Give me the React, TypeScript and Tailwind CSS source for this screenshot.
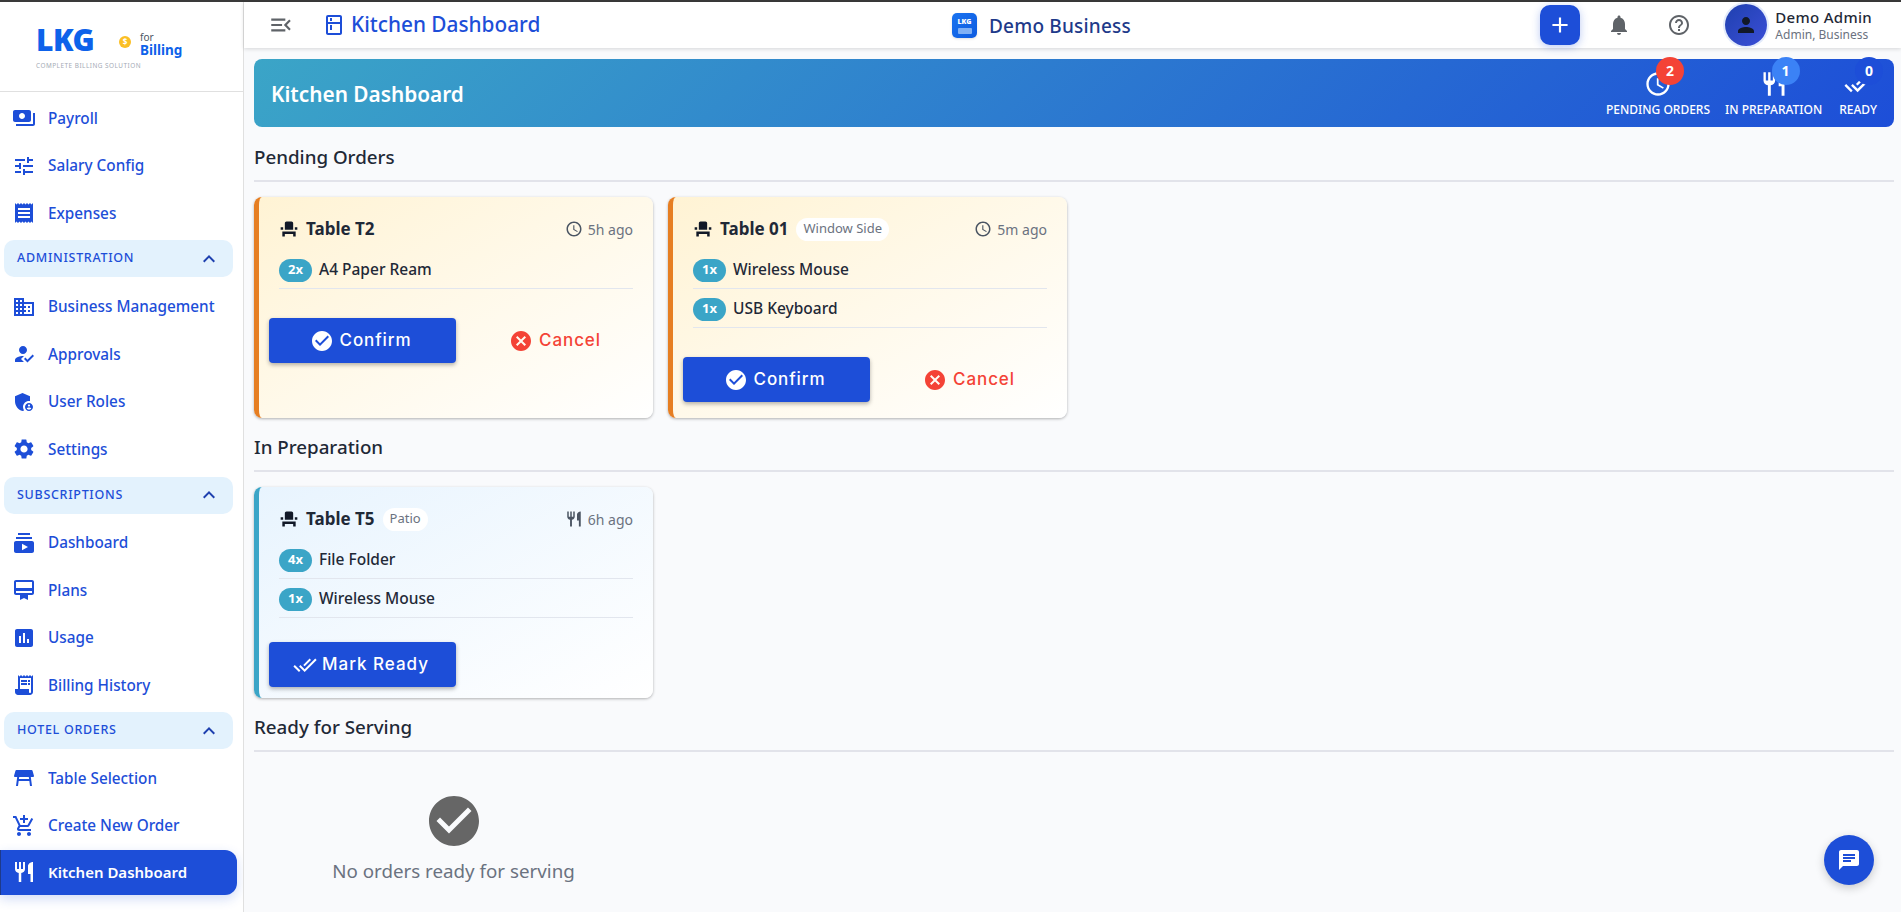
import type { ReactNode } from 'react';
import {
  MdAccessTime,
  MdAddShoppingCart,
  MdAdminPanelSettings,
  MdAssessment,
  MdBusiness,
  MdCancel,
  MdCardMembership,
  MdChat,
  MdCheckCircle,
  MdDoneAll,
  MdEventSeat,
  MdExpandLess,
  MdHelpOutline,
  MdHowToReg,
  MdMenuOpen,
  MdNotifications,
  MdOutlineKitchen,
  MdPayments,
  MdPerson,
  MdReceipt,
  MdReceiptLong,
  MdRestaurant,
  MdSettings,
  MdSubscriptions,
  MdTableRestaurant,
  MdTune,
  MdAdd,
} from 'react-icons/md';

function NavItem({ icon, label, active }: { icon: ReactNode; label: string; active?: boolean }) {
  if (active) {
    return (
      <div className="flex h-[45px] w-[237px] items-center gap-[12px] rounded-r-[12px] border-l border-[#1e3a8a] bg-[#1d4ed8] pl-[11px] text-[15px] font-semibold text-white shadow-[0_4px_12px_rgba(29,78,216,0.2)]">
        <span className="text-[24px]">{icon}</span>
        {label}
      </div>
    );
  }
  return (
    <div className="flex h-[47.5px] items-center gap-[12px] pl-3 text-[15.3px] font-medium text-[#1d4ed8]">
      <span className="text-[24px]">{icon}</span>
      {label}
    </div>
  );
}

function NavSection({ label, className }: { label: string; className: string }) {
  return (
    <div className={`ml-1 flex h-[37px] w-[229px] items-center justify-between rounded-[10px] bg-[#e3f2fd] pr-[12px] pl-[13px] text-[12.5px] font-medium tracking-[0.7px] text-[#1d4ed8] ${className}`}>
      {label}
      <MdExpandLess className="text-[24px] text-[#1e40af]" />
    </div>
  );
}

function Sidebar() {
  return (
    <aside className="flex w-[244px] shrink-0 flex-col overflow-hidden border-r border-[#e0e0e0] bg-white">
      <div className="flex h-[90px] shrink-0 flex-col border-b border-[#e0e0e0] pt-[22px] pl-[36px]">
        <div className="flex h-[32px] items-center">
          <span className="w-[56px] text-[30px] leading-[32px] font-black tracking-[-0.5px] text-[#0d62ea]">LKG</span>
          <span className="ml-[27px] flex h-[12px] w-[12px] translate-y-[2px] items-center justify-center rounded-full bg-[#fbbf24] text-[8px] leading-[12px] font-bold text-white">$</span>
          <div className="ml-[9px] flex translate-y-[4px] flex-col">
            <span className="text-[10px] leading-[12px] text-[#4b5563]">for</span>
            <span className="text-[13.5px] leading-[15px] font-bold text-[#0d62ea]">Billing</span>
          </div>
        </div>
        <span className="mt-[5px] text-[6.4px] tracking-[0.5px] text-[#a3aab5]">COMPLETE BILLING SOLUTION</span>
      </div>
      <nav className="flex flex-col pt-[2.5px]">
        <NavItem icon={<MdPayments />} label="Payroll" />
        <NavItem icon={<MdTune />} label="Salary Config" />
        <NavItem icon={<MdReceipt />} label="Expenses" />
        <NavSection label="ADMINISTRATION" className="mt-[3px] mb-[6px]" />
        <NavItem icon={<MdBusiness />} label="Business Management" />
        <NavItem icon={<MdHowToReg />} label="Approvals" />
        <NavItem icon={<MdAdminPanelSettings />} label="User Roles" />
        <NavItem icon={<MdSettings />} label="Settings" />
        <NavSection label="SUBSCRIPTIONS" className="mt-[3.5px] mb-[5.5px]" />
        <NavItem icon={<MdSubscriptions />} label="Dashboard" />
        <NavItem icon={<MdCardMembership />} label="Plans" />
        <NavItem icon={<MdAssessment />} label="Usage" />
        <NavItem icon={<MdReceiptLong />} label="Billing History" />
        <NavSection label="HOTEL ORDERS" className="mt-[3px] mb-[5.5px]" />
        <NavItem icon={<MdTableRestaurant />} label="Table Selection" />
        <NavItem icon={<MdAddShoppingCart />} label="Create New Order" />
        <NavItem icon={<MdRestaurant />} label="Kitchen Dashboard" active />
      </nav>
    </aside>
  );
}

function Topbar() {
  return (
    <header className="relative z-10 flex h-[46px] shrink-0 items-center bg-white pl-[24px] shadow-[0_1px_4px_rgba(0,0,0,0.15)]">
      <MdMenuOpen className="text-[26px] text-[#5f6368]" />
      <MdOutlineKitchen className="ml-[28px] text-[24px] text-[#1d4ed8]" />
      <span className="ml-[5px] text-[20.8px] font-medium text-[#1d4ed8]">Kitchen Dashboard</span>

      <div className="absolute left-[708px] flex items-center">
        <div className="flex h-[25px] w-[25px] flex-col items-center rounded-[5px] bg-gradient-to-br from-[#1a73f0] to-[#0d5be0] pt-[5px] shadow-sm">
          <span className="text-[7px] leading-[7px] font-black text-white">LKG</span>
          <span className="mt-[3px] h-[6px] w-[14px] rounded-[1px] bg-[#7fb0f5]" />
        </div>
        <span className="mt-[2px] ml-[12px] text-[19px] font-medium tracking-[0.2px] text-[#1e3a8a]">Demo Business</span>
      </div>

      <div className="ml-auto flex items-center pr-[29px]">
        <button className="flex h-[40px] w-[40px] items-center justify-center rounded-[10px] bg-[#1d4ed8] text-[26px] text-white shadow-[0_2px_8px_rgba(29,78,216,0.3)]">
          <MdAdd />
        </button>
        <MdNotifications className="ml-[27px] text-[24px] text-[#5f6368]" />
        <MdHelpOutline className="ml-[36px] text-[24px] text-[#5f6368]" />
        <div className="ml-[34px] flex h-[42px] w-[42px] items-center justify-center rounded-full bg-gradient-to-br from-[#1e40af] to-[#3b4fd8] text-[24px] text-[#111827] ring-2 ring-[#e3ebfb]">
          <MdPerson />
        </div>
        <div className="ml-[8px] flex flex-col">
          <span className="text-[15px] leading-[20px] font-medium tracking-[0.3px] text-[#1f2937]">Demo Admin</span>
          <span className="text-[12px] leading-[16px] text-[#6b7280]">Admin, Business</span>
        </div>
      </div>
    </header>
  );
}

function Stat({ icon, label, count, badge, className }: { icon: ReactNode; label: string; count: number; badge: string; className?: string }) {
  return (
    <div className={`relative flex flex-col items-center ${className ?? ''}`}>
      <span className="text-[28px] leading-[28px] text-white">{icon}</span>
      <span className={`absolute top-[-13px] left-1/2 ml-[-2px] flex h-[28px] w-[28px] items-center justify-center rounded-full text-[14px] font-bold text-white ${badge}`}>
        {count}
      </span>
      <span className="mt-[3px] text-[12px] font-medium text-white">{label}</span>
    </div>
  );
}

function SectionHeading({ children, className }: { children: ReactNode; className?: string }) {
  return (
    <h2 className={`mb-[15px] border-b-2 border-[#e2e3ea] pb-[10px] text-[18.75px] leading-[26px] font-medium text-[#1f2937] ${className ?? ''}`}>
      {children}
    </h2>
  );
}

type OrderItem = { qty: string; name: string };

function OrderCard({
  table,
  area,
  age,
  items,
  tone,
  children,
}: {
  table: string;
  area?: string;
  age: string;
  items: OrderItem[];
  tone: 'pending' | 'preparing';
  children: ReactNode;
}) {
  const pending = tone === 'pending';
  return (
    <div
      className={`flex w-[399px] flex-col rounded-[8px] border-l-[5px] bg-gradient-to-br to-white pt-[19px] shadow-[0_1px_3px_rgba(0,0,0,0.3)] ${
        pending ? 'border-[#e67e22] from-[#fff3d4]' : 'border-[#3ba5c7] from-[#e8f4fe]'
      }`}
    >
      <div className="flex h-[26px] items-center pr-[20px] pl-[20px]">
        <MdEventSeat className="text-[20px] text-[#111827]" />
        <span className="ml-[7px] text-[17px] font-bold text-[#1f2937]">{table}</span>
        {area && (
          <span className="ml-[8px] flex h-[23px] items-center rounded-full bg-white px-[7px] text-[13px] text-[#6b7280]">{area}</span>
        )}
        <span className="ml-auto flex items-center gap-[5px] text-[14px] text-[#6b7280]">
          {pending ? <MdAccessTime className="text-[18px] text-[#4b5563]" /> : <MdRestaurant className="text-[18px] text-[#4b5563]" />}
          {age}
        </span>
      </div>
      <div className="mt-[8px] flex flex-col pr-[20px] pl-[20px]">
        {items.map((item) => (
          <div key={item.name} className="flex h-[39px] items-center border-b border-[#e2e6ee] pt-[2px]">
            <span className="flex h-[23px] w-[33px] items-center justify-center rounded-full bg-[#3ba5c7] text-[13px] font-bold text-white">{item.qty}</span>
            <span className="ml-[7px] text-[15.5px] font-medium text-[#1f2937]">{item.name}</span>
          </div>
        ))}
      </div>
      {children}
    </div>
  );
}

function PendingActions() {
  return (
    <div className="mt-[29px] flex pr-[10px] pb-[16px] pl-[10px]">
      <button className="flex h-[45px] w-[187px] items-center justify-center gap-[6px] rounded-[4px] bg-[#1d4ed8] pr-[4px] font-['Inter',sans-serif] text-[17px] font-medium tracking-[0.9px] text-white shadow-[0_2px_4px_rgba(0,0,0,0.3)]">
        <MdCheckCircle className="text-[24px]" />
        Confirm
      </button>
      <button className="ml-[11px] flex h-[45px] flex-1 items-center justify-center gap-[6px] font-['Inter',sans-serif] text-[17px] font-medium tracking-[0.9px] text-[#f44336]">
        <MdCancel className="text-[24px]" />
        Cancel
      </button>
    </div>
  );
}

export default function App() {
  return (
    <div className="flex h-[912px] w-[1901px] flex-col overflow-hidden bg-[#f9fafc] font-['Noto_Sans',sans-serif]">
      <div className="h-[2px] shrink-0 bg-[#3a3a3a]" />
      <div className="flex min-h-0 flex-1">
        <Sidebar />
        <div className="relative flex min-w-0 flex-1 flex-col">
          <Topbar />
          <main className="flex flex-col pt-[11px] pr-[7px] pl-[10px]">
            <section className="mb-[17px] flex h-[68px] items-center justify-between rounded-[8px] bg-[linear-gradient(135deg,#3ba5c7,#1d4ed8)] pr-[17px] pl-[17px]">
              <h1 className="mt-[3px] text-[20.8px] font-semibold text-white">Kitchen Dashboard</h1>
              <div className="flex items-end gap-[15px] pt-[2px]">
                <Stat icon={<MdAccessTime />} label="PENDING ORDERS" count={2} badge="bg-[#f44336]" />
                <Stat icon={<MdRestaurant />} label="IN PREPARATION" count={1} badge="bg-[#3b82f6]" />
                <Stat icon={<MdDoneAll />} label="READY" count={0} badge="bg-[#1d4ed8]" className="pl-[2px]" />
              </div>
            </section>

            <SectionHeading>Pending Orders</SectionHeading>
            <div className="flex gap-[15px]">
              <OrderCard table="Table T2" age="5h ago" tone="pending" items={[{ qty: '2x', name: 'A4 Paper Ream' }]}>
                <PendingActions />
              </OrderCard>
              <OrderCard
                table="Table 01"
                area="Window Side"
                age="5m ago"
                tone="pending"
                items={[
                  { qty: '1x', name: 'Wireless Mouse' },
                  { qty: '1x', name: 'USB Keyboard' },
                ]}
              >
                <PendingActions />
              </OrderCard>
            </div>

            <SectionHeading className="mt-[16px]">In Preparation</SectionHeading>
            <OrderCard
              table="Table T5"
              area="Patio"
              age="6h ago"
              tone="preparing"
              items={[
                { qty: '4x', name: 'File Folder' },
                { qty: '1x', name: 'Wireless Mouse' },
              ]}
            >
              <div className="mt-[24px] flex pr-[10px] pb-[11px] pl-[10px]">
                <button className="flex h-[45px] w-[187px] items-center justify-center gap-[5px] rounded-[4px] bg-[#1d4ed8] pr-[3px] font-['Inter',sans-serif] text-[17px] font-medium tracking-[1px] text-white shadow-[0_2px_4px_rgba(0,0,0,0.3)]">
                  <MdDoneAll className="text-[24px]" />
                  Mark Ready
                </button>
              </div>
            </OrderCard>

            <SectionHeading className="mt-[16px]">Ready for Serving</SectionHeading>
            <div className="flex w-[399px] flex-col items-center pt-[24px]">
              <MdCheckCircle className="text-[60px] text-[#666666]" />
              <span className="mt-[6px] text-[18.75px] text-[#6b7280]">No orders ready for serving</span>
            </div>
          </main>
          <button className="absolute top-[833px] left-[1580px] flex h-[50px] w-[50px] items-center justify-center rounded-full bg-[#1d4ed8] text-[24px] text-white shadow-[0_3px_10px_rgba(0,0,0,0.2)]">
            <MdChat />
          </button>
        </div>
      </div>
    </div>
  );
}
